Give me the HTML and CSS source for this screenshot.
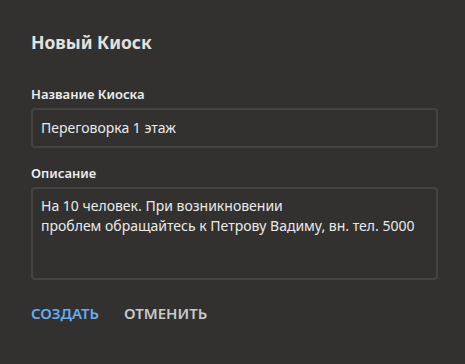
FILE: index.html
```html
<!DOCTYPE html>
<html lang="ru">
<head>
<meta charset="utf-8">
<link rel="stylesheet" href="styles.css">
</head>
<body>
<div class="dialog">
  <h1 class="title">Новый Киоск</h1>
  <div class="field">
    <label class="label">Название Киоска</label>
    <div class="input">Переговорка 1 этаж</div>
  </div>
  <div class="field">
    <label class="label">Описание</label>
    <div class="input textarea">На 10 человек. При возникновении<br>проблем обращайтесь к Петрову Вадиму, вн. тел. 5000</div>
  </div>
  <div class="actions">
    <span class="btn primary">СОЗДАТЬ</span>
    <span class="btn">ОТМЕНИТЬ</span>
  </div>
</div>
</body>
</html>
```
FILE: styles.css
```css
html, body {
  margin: 0;
  padding: 0;
  background: #333130;
  height: 100%;
}
.dialog {
  font-family: "Noto Sans", "Liberation Sans", sans-serif;
  color: #e6e6e6;
  padding: 30px 27px 0 31px;
  display: flex;
  flex-direction: column;
}
.title {
  margin: 0;
  font-size: 17.5px;
  font-weight: 700;
  line-height: 24px;
  color: #e2e2e2;
}
.field {
  display: flex;
  flex-direction: column;
}
.label {
  font-size: 13px;
  font-weight: 600;
  line-height: 18px;
  color: #ececec;
  margin-top: 31px;
  margin-bottom: 5px;
}
.field + .field .label { margin-top: 16px; }
.input {
  box-sizing: border-box;
  border: 2px solid #444342;
  border-radius: 4px;
  height: 40px;
  padding: 8px 8px;
  font-size: 14px;
  line-height: 20px;
  color: #eaeaea;
}
.textarea {
  height: 93px;
  padding-top: 7px;
}
.actions {
  display: flex;
  gap: 25px;
  margin-top: 23px;
}
.btn {
  font-size: 15px;
  font-weight: 600;
  line-height: 20px;
  color: #c9c9c9;
}
.btn.primary { color: #64adf2; }
```
